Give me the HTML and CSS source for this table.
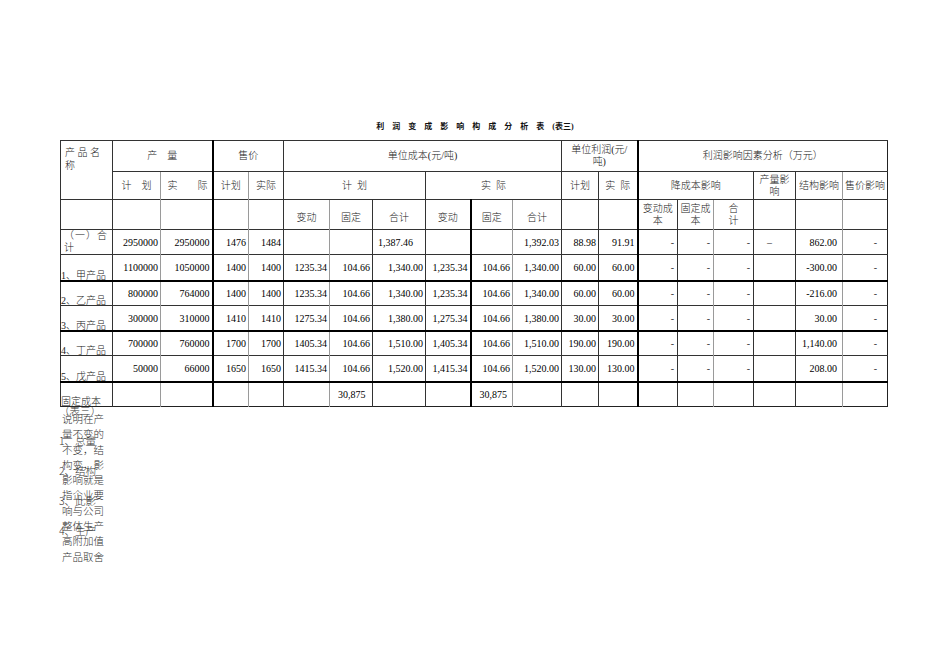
FILE: index.html
```html
<!DOCTYPE html>
<html lang="zh-CN">
<head>
<meta charset="utf-8">
<title>利润变成影响构成分析表</title>
<link rel="stylesheet" href="styles.css">
</head>
<body>
<div class="page">
  <div class="title"><span class="title-main">利润变成影响构成分析表</span>(表三)</div>
  <table class="sheet">
    <colgroup>
      <col class="w52"><col class="w48"><col class="w52"><col class="w36"><col class="w35">
      <col class="w46"><col class="w43"><col class="w53"><col class="w45"><col class="w42">
      <col class="w49"><col class="w37"><col class="w39"><col class="w40"><col class="w36">
      <col class="w40"><col class="w42"><col class="w47"><col class="w45">
    </colgroup>
    <tr class="h1">
      <td rowspan="2" class="corner">产 品 名<br>称</td>
      <td colspan="2" class="hd">产　量</td>
      <td colspan="2" class="hd k">售价</td>
      <td colspan="6" class="hd">单位成本(元/吨)</td>
      <td colspan="2" class="hd two">单位利润(元/<br>吨)</td>
      <td colspan="6" class="hd k">利润影响因素分析（万元）</td>
    </tr>
    <tr class="h2">
      <td class="hd">计　划</td>
      <td class="hd g wide">实　　际</td>
      <td class="hd k">计划</td>
      <td class="hd g">实际</td>
      <td colspan="3" class="hd">计&ensp;划</td>
      <td colspan="3" class="hd">实&ensp;际</td>
      <td class="hd">计划</td>
      <td class="hd">实&ensp;际</td>
      <td colspan="3" class="hd k">降成本影响</td>
      <td class="hd two">产量影<br>响</td>
      <td class="hd">结构影响</td>
      <td class="hd g">售价影响</td>
    </tr>
    <tr class="h3">
      <td></td><td></td><td class="g"></td><td class="k"></td><td class="g"></td>
      <td class="hd low">变动</td><td class="hd low g">固定</td><td class="hd low">合计</td>
      <td class="hd low">变动</td><td class="hd low k">固定</td><td class="hd low g">合计</td>
      <td></td><td></td>
      <td class="hd two k">变动成<br>本</td><td class="hd two">固定成<br>本</td><td class="hd two g">合<br>计</td>
      <td></td><td></td><td class="g"></td>
    </tr>
    <tr class="row b1">
      <td class="lbl total">（一）合<br>计</td>
      <td>2950000</td><td>2950000</td><td>1476</td><td>1484</td>
      <td></td><td></td><td class="pr12">1,387.46</td><td></td><td></td><td>1,392.03</td>
      <td>88.98</td><td>91.91</td>
      <td class="dash">-</td><td class="dash">-</td><td class="dash">-</td><td class="mid">–</td><td class="struct">862.00</td><td class="last">-</td>
    </tr>
    <tr class="row b2">
      <td class="lbl">1、甲产品</td>
      <td>1100000</td><td>1050000</td><td>1400</td><td>1400</td>
      <td>1235.34</td><td>104.66</td><td>1,340.00</td><td>1,235.34</td><td>104.66</td><td>1,340.00</td>
      <td>60.00</td><td>60.00</td>
      <td class="dash">-</td><td class="dash">-</td><td class="dash">-</td><td></td><td class="struct">-300.00</td><td class="last">-</td>
    </tr>
    <tr class="row tk b3">
      <td class="lbl">2、乙产品</td>
      <td>800000</td><td>764000</td><td>1400</td><td>1400</td>
      <td>1235.34</td><td>104.66</td><td>1,340.00</td><td>1,235.34</td><td>104.66</td><td>1,340.00</td>
      <td>60.00</td><td>60.00</td>
      <td class="dash">-</td><td class="dash">-</td><td class="dash">-</td><td></td><td class="struct">-216.00</td><td class="last">-</td>
    </tr>
    <tr class="row b4">
      <td class="lbl">3、丙产品</td>
      <td>300000</td><td>310000</td><td>1410</td><td>1410</td>
      <td>1275.34</td><td>104.66</td><td>1,380.00</td><td>1,275.34</td><td>104.66</td><td>1,380.00</td>
      <td>30.00</td><td>30.00</td>
      <td class="dash">-</td><td class="dash">-</td><td class="dash">-</td><td></td><td class="struct">30.00</td><td class="last">-</td>
    </tr>
    <tr class="row tk b5">
      <td class="lbl">4、丁产品</td>
      <td>700000</td><td>760000</td><td>1700</td><td>1700</td>
      <td>1405.34</td><td>104.66</td><td>1,510.00</td><td>1,405.34</td><td>104.66</td><td>1,510.00</td>
      <td>190.00</td><td>190.00</td>
      <td class="dash">-</td><td class="dash">-</td><td class="dash">-</td><td></td><td class="struct">1,140.00</td><td class="last">-</td>
    </tr>
    <tr class="row b6">
      <td class="lbl">5、戊产品</td>
      <td>50000</td><td>66000</td><td>1650</td><td>1650</td>
      <td>1415.34</td><td>104.66</td><td>1,520.00</td><td>1,415.34</td><td>104.66</td><td>1,520.00</td>
      <td>130.00</td><td>130.00</td>
      <td class="dash">-</td><td class="dash">-</td><td class="dash">-</td><td></td><td class="struct">208.00</td><td class="last">-</td>
    </tr>
    <tr class="row tk b7">
      <td class="lbl">固定成本</td>
      <td></td><td></td><td></td><td></td>
      <td></td><td class="fix">30,875</td><td></td><td></td><td class="fix">30,875</td><td></td>
      <td></td><td></td>
      <td></td><td></td><td></td><td></td><td></td><td></td>
    </tr>
  </table>
  <div class="notes">
    <div class="note-a">说明在产<br>量不变的<br>不变，结<br>构变，影<br>影响就是<br>指企业要<br>响与公司<br>整体生产<br>高附加值<br>产品取舍</div>
    <div class="note-b">（表三）<br>1、总量<br>2、结构<br>3、此影<br>4、生产</div>
  </div>
</div>
</body>
</html>
```

FILE: styles.css
```css
html, body {
  margin: 0;
  background: #fff;
}

body {
  font-family: "Liberation Serif", "Noto Sans CJK SC", serif;
  color: #000;
}

.page {
  padding-top: 121px;
}

.title {
  text-align: center;
  font-size: 8px;
  line-height: 12px;
  height: 12px;
  margin-bottom: 7px;
  font-weight: bold;
  color: #111;
}

.title-main {
  letter-spacing: 8px;
}

.sheet {
  margin-left: 60px;
  border-collapse: collapse;
  table-layout: fixed;
  width: 827px;
  font-size: 10px;
  border-right: 1px solid #222;
  border-bottom: 1px solid #222;
}

.w52 { width: 52px; }
.w48 { width: 48px; }
.w36 { width: 36px; }
.w35 { width: 35px; }
.w46 { width: 46px; }
.w43 { width: 43px; }
.w53 { width: 53px; }
.w45 { width: 45px; }
.w42 { width: 42px; }
.w49 { width: 49px; }
.w37 { width: 37px; }
.w39 { width: 39px; }
.w40 { width: 40px; }
.w47 { width: 47px; }

.sheet td {
  border: 0 none;
  border-top: 1px solid #333;
  border-left: 1px solid #333;
  padding: 0 2px 0 0;
  white-space: nowrap;
  text-align: right;
  vertical-align: middle;
  line-height: 12px;
}

.sheet td.g { border-left-color: #9a9a9a; }
.sheet td.k { border-left: 2px solid #000; }
.sheet tr.tk td { border-top: 2px solid #000; }

.h1 { height: 31px; }
.h2 { height: 28px; }
.h3 { height: 30px; }
.b1 { height: 25px; }
.b2 { height: 26px; }
.b3, .b4, .b5 { height: 25px; }
.b6 { height: 26px; }
.b7 { height: 25px; }

.sheet td.hd {
  text-align: center;
  padding: 0;
  color: #222;
  font-weight: 300;
}

.sheet td.two {
  line-height: 12px;
}

.sheet td.low {
  padding-top: 6px;
}

.sheet td.wide {
  text-align: right;
  padding-right: 4px;
}

.sheet td.corner {
  vertical-align: top;
  text-align: left;
  padding: 5px 0 0 4px;
  color: #222;
  font-weight: 300;
  line-height: 13px;
}

/* body rows: gray / thick vertical lines by column */
.row td:nth-child(3),
.row td:nth-child(5),
.row td:nth-child(7),
.row td:nth-child(11),
.row td:nth-child(16),
.row td:nth-child(19) { border-left-color: #9a9a9a; }

.row td:nth-child(4),
.row td:nth-child(10),
.row td:nth-child(14) { border-left: 2px solid #000; }

.row td { padding-top: 2px; }

.sheet td.lbl {
  text-align: left;
  vertical-align: bottom;
  padding: 0;
  line-height: 8px;
  color: #222;
  font-weight: 300;
  overflow: visible;
}

.sheet td.total {
  line-height: 12px;
  padding: 0 0 0 3px;
  letter-spacing: 1px;
}

.sheet td.pr12 { padding-right: 12px; }

.sheet td.dash { padding-right: 3px; color: #333; }
.sheet td.mid { text-align: center; padding-right: 10px; color: #333; }
.sheet td.struct { padding-right: 5px; }
.sheet td.last { padding-right: 10px; color: #333; }

.sheet td.fix {
  text-align: left;
  padding-left: 8px;
}

.notes {
  position: relative;
  margin-left: 62px;
  width: 50px;
  height: 160px;
  font-size: 10.5px;
  color: #333;
  font-weight: 300;
  font-family: "Noto Sans CJK SC", sans-serif;
}

.note-a {
  position: absolute;
  left: 0;
  top: 4px;
  line-height: 15.3px;
}

.note-b {
  position: absolute;
  left: -3px;
  top: -11px;
  line-height: 30px;
}
```
